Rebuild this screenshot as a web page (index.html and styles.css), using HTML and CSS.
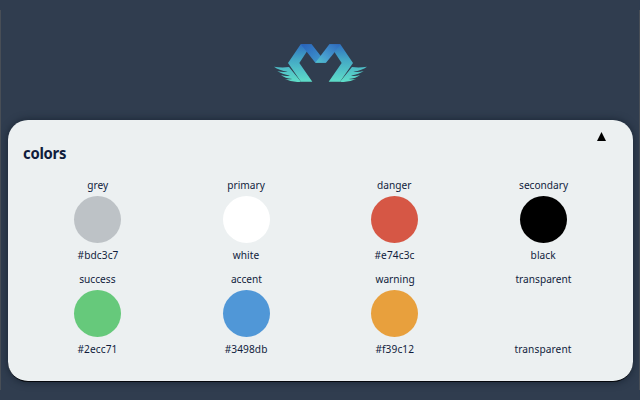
FILE: index.html
```html
<!DOCTYPE html>
<html lang="en">
<head>
<meta charset="utf-8">
<title>Colors</title>
<link rel="stylesheet" href="styles.css">
</head>
<body>
<header class="header">
<svg class="logo" viewBox="0 0 330 165" aria-hidden="true">
<defs>
<linearGradient id="body" gradientUnits="userSpaceOnUse" x1="0" y1="28" x2="0" y2="140"><stop offset="0" stop-color="#2f70c0"/><stop offset=".4" stop-color="#43a7c5"/><stop offset="1" stop-color="#5eddc8"/></linearGradient>
<linearGradient id="fold" x1="0" y1="0" x2="1" y2="1"><stop offset="0" stop-color="#2861bb"/><stop offset="1" stop-color="#439fce"/></linearGradient>
<linearGradient id="rise" x1="1" y1="0" x2="0" y2="1"><stop offset="0" stop-color="#2d68bd"/><stop offset=".65" stop-color="#489fcf"/><stop offset="1" stop-color="#53c7ca"/></linearGradient>
</defs>
<g id="half" fill="url(#body)">
<path d="M107 28h33L103 84l39 56h-34L69 84z"/>
<path d="M27 95q23 4 45 1l36 44q-26 3-48-8 12 2 22 0-22-2-34-12 14 4 27 2-24-4-38-14 16 4 31 2-26-4-41-15z"/>
</g>
<use href="#half" transform="matrix(-1 0 0 1 333 0)"/>
<path d="M107 28h33l43 55h-32l-23-29z" fill="url(#fold)"/>
<path d="M226 28h-33l-42 55h32l24-29z" fill="url(#rise)"/>
</svg>
</header>
<main class="card">
<div class="toggle"><svg viewBox="0 0 9 9"><path d="M4.5 0 9 9H0z"/></svg></div>
<h1 class="title">colors</h1>
<div class="grid">
<div class="swatch"><span>grey</span><i class="dot grey"></i><span>#bdc3c7</span></div>
<div class="swatch"><span>primary</span><i class="dot primary"></i><span>white</span></div>
<div class="swatch"><span>danger</span><i class="dot danger"></i><span>#e74c3c</span></div>
<div class="swatch"><span>secondary</span><i class="dot secondary"></i><span>black</span></div>
<div class="swatch"><span>success</span><i class="dot success"></i><span>#2ecc71</span></div>
<div class="swatch"><span>accent</span><i class="dot accent"></i><span>#3498db</span></div>
<div class="swatch"><span>warning</span><i class="dot warning"></i><span>#f39c12</span></div>
<div class="swatch"><span>transparent</span><i class="dot"></i><span>transparent</span></div>
</div>
</main>
</body>
</html>
```
FILE: styles.css
```css
* { box-sizing: border-box; }
body { margin: 0; height: 400px; overflow: hidden; background: linear-gradient(#484e56, #484e56) 0 10px / 1px 380px no-repeat, linear-gradient(#484e56, #484e56) 100% 10px / 1px 380px no-repeat, #303d4f; color: #101c3c; font-family: "Noto Sans", sans-serif; }
.header { height: 120px; padding-top: 35px; display: flex; justify-content: center; }
.logo { width: 110px; height: 55px; }
.card { margin: 0 7px 0 8px; height: 262px; padding: 12px 15px; border-radius: 20px; background: #ecf0f1; border-bottom: 1px solid #05080d; box-shadow: 0 0 7px 1px #1d2938; }
.toggle { height: 9.5px; display: flex; justify-content: flex-end; padding-right: 12px; }
.toggle svg { width: 9px; height: 9px; fill: #000; flex: none; }
.title { margin: 0; height: 35px; font-size: 16.5px; line-height: 22px; letter-spacing: -.3px; font-weight: 700; transform: scaleX(.9); transform-origin: left; }
.grid { display: grid; grid-template-columns: repeat(4, 148.5px); grid-auto-rows: 94.5px; padding-left: .5px; }
.swatch { display: flex; flex-direction: column; align-items: center; font-size: 11.4px; line-height: 16px; }
.swatch span { transform: scaleX(.89); }
.dot { width: 47px; height: 47px; margin: 3px 0 4px; border-radius: 50%; }
.dot + span { letter-spacing: .1px; }
.grey { background: #bdc2c6; }
.primary { background: #fff; }
.danger { background: #d65745; }
.secondary { background: #000; }
.success { background: #66c97b; }
.accent { background: #5097d7; }
.warning { background: #e8a03d; }
```
